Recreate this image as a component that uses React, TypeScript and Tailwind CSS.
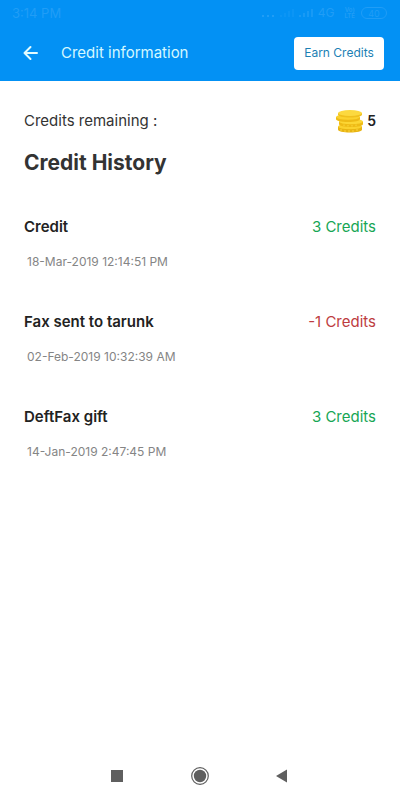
import React from "react";

type Entry = { title: string; date: string; credits: number };

const entries: Entry[] = [
  { title: "Credit", date: "18-Mar-2019 12:14:51 PM", credits: 3 },
  { title: "Fax sent to tarunk", date: "02-Feb-2019 10:32:39 AM", credits: -1 },
  { title: "DeftFax gift", date: "14-Jan-2019 2:47:45 PM", credits: 3 },
];

function StatusBar() {
  return (
    <div className="flex h-[26px] items-center justify-between pl-3 pr-[13px] text-[#209df6]">
      <span className="text-[13px] leading-4">3:14 PM</span>
      <div className="flex items-center">
        <svg width="54" height="12" viewBox="0 0 54 12" fill="currentColor" aria-hidden="true">
          <path d="M0 8h2v2H0zM5 8h2v2H5zM10 8h2v2h-2z" />
          <path d="M18 8h2v2h-2zM22 6h2v4h-2zM26 4h2v6h-2zM30 2h2v8h-2z" opacity=".35" />
          <path d="M37 8h2v2h-2zM41 6h2v4h-2zM45 4h2v6h-2zM49 2h2v8h-2z" opacity=".75" />
        </svg>
        <span className="ml-0.5 text-xs leading-4">4G</span>
        <span className="ml-2.5 flex flex-col text-center text-[6px] font-bold leading-[6px]">
          <span>Vo)</span>
          <span>LTE</span>
        </span>
        <span className="ml-1.5 flex h-3 w-[26px] items-center justify-center rounded-full border border-current text-[9px] leading-none">
          40
        </span>
      </div>
    </div>
  );
}

function Coins() {
  return (
    <svg width="28" height="24" viewBox="0 0 28 24" aria-hidden="true">
      <path d="M2 17.500v3c0 1.800 5 3 12 3s12-1.200 12-3v-3z" fill="#e8b412" />
      <ellipse cx="14" cy="17.500" rx="12" ry="2.800" fill="#fbd22e" />
      <path d="M3 12.500v2.500c0 1.800 5 3 12 3s12-1.200 12-3v-2.500z" fill="#eebb16" />
      <ellipse cx="15" cy="12.500" rx="12" ry="2.800" fill="#fcd634" />
      <path d="M0 8v2c0 1.800 5 3 12 3s12-1.200 12-3V8z" fill="#eebb16" />
      <ellipse cx="12" cy="8" rx="12" ry="2.800" fill="#fbd22e" />
      <path d="M2 4v1.500c0 1.800 5 3 12 3s12-1.200 12-3V4z" fill="#f0c01d" />
      <ellipse cx="14" cy="4" rx="12" ry="3" fill="#fcd93f" />
      <path d="M5 20v2M9 21v2M13 21v2M17 21v2M21 20v2M8 15.500v1.500M12 16v1.500M16 16v1.500M20 15.500v1.500" stroke="#fad53c" />
    </svg>
  );
}

function Row({ entry }: { entry: Entry }) {
  const tone = entry.credits < 0 ? "text-[#bd3c40]" : "text-[#17a655]";
  return (
    <li className="h-[95px]">
      <div className="flex items-center justify-between text-[15px] leading-5">
        <h2 className="font-semibold text-[#222222]">{entry.title}</h2>
        <span className={tone}>{entry.credits} Credits</span>
      </div>
      <p className="mt-[15px] pl-[3px] text-xs leading-5 text-[#858585]">{entry.date}</p>
    </li>
  );
}

export default function App() {
  return (
    <div className="flex min-h-screen flex-col bg-white font-['Inter',sans-serif] text-[#333333]">
      <header className="bg-[#0391f4]">
        <StatusBar />
        <div className="flex h-[55px] items-center pb-px pl-[23px] pr-4">
          <button type="button" aria-label="Back" className="text-[#e2fcff]">
            <svg width="16" height="16" viewBox="0 0 16 16" fill="none" stroke="currentColor" strokeWidth="2" strokeLinecap="round" strokeLinejoin="round">
              <path d="M14 8H1.500M7.500 2l-6 6 6 6" />
            </svg>
          </button>
          <h1 className="ml-[22px] grow text-[15px] leading-5 text-[#d4f8ff]">Credit information</h1>
          <button type="button" className="h-[33px] w-[90px] rounded bg-white text-xs text-[#1c7fb4]">
            Earn Credits
          </button>
        </div>
      </header>

      <main className="grow px-6 pt-7">
        <div className="flex h-6 items-center justify-between">
          <span className="text-[15px] leading-5">Credits remaining :</span>
          <span className="flex items-center gap-[3px] text-sm font-semibold text-[#222222]">
            <Coins />5
          </span>
        </div>
        <h2 className="mt-4 text-[21px] font-bold leading-7">Credit History</h2>
        <ul className="mt-10">
          {entries.map((entry) => (
            <Row key={entry.date} entry={entry} />
          ))}
        </ul>
      </main>

      <nav className="flex h-12 items-center justify-center gap-[66px] text-[#5f5f5f]">
        <button type="button" aria-label="Recent apps">
          <svg width="18" height="18" viewBox="0 0 18 18" fill="currentColor">
            <path d="M4 3h12v12H4z" />
          </svg>
        </button>
        <button type="button" aria-label="Home">
          <svg width="18" height="18" viewBox="0 0 18 18">
            <circle cx="9" cy="9" r="8.300" fill="none" stroke="currentColor" strokeWidth="1.200" />
            <circle cx="9" cy="9" r="6.200" fill="currentColor" />
          </svg>
        </button>
        <button type="button" aria-label="Back to previous screen">
          <svg width="18" height="18" viewBox="0 0 18 18" fill="currentColor">
            <path d="M12 2.500v13L1 9z" />
          </svg>
        </button>
      </nav>
    </div>
  );
}
